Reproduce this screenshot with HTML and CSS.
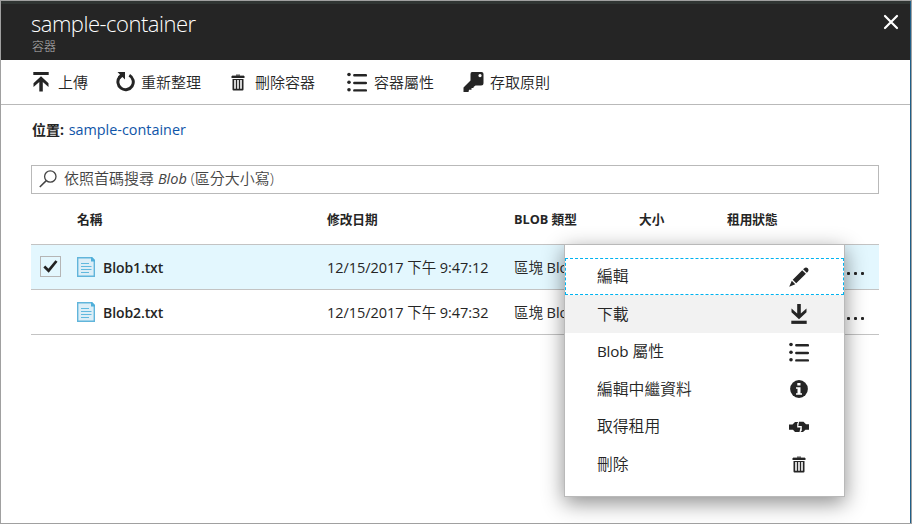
FILE: index.html
```html
<!DOCTYPE html>
<html lang="zh-Hant">
<head>
<meta charset="utf-8">
<title>sample-container</title>
<link rel="stylesheet" href="styles.css">
</head>
<body>
<svg class="defs" width="0" height="0">
  <symbol id="trash" viewBox="0 0 14 17"><path d="M5 .5h4v1h4v2H1v-2h4z" fill="#555"/><path d="M.5 2h13v2H.5z"/><path fill-rule="evenodd" d="M1.500 5h11v10.500q0 1-1 1h-9q-1 0-1-1zM3.200 6v8.700h1.600V6zm3 0v8.700h1.600V6zm3 0v8.700h1.600V6z"/></symbol>
  <symbol id="list" viewBox="0 0 20 20"><circle cx="2" cy="2.500" r="1.800"/><circle cx="2" cy="10.200" r="1.800"/><circle cx="2" cy="17.800" r="1.800"/><path d="M7.300 3.300h11.600M7.300 11h11.600M7.300 18.400h11.600" stroke="#252525" stroke-width="2.400" stroke-linecap="round"/></symbol>
  <symbol id="file" viewBox="0 0 18 20"><path d="M.7.7h14L17.300 3.500V19.300H.7z" fill="#dceef7" stroke="#61b5db" stroke-width="1.400"/><path d="M14 0h1l3 3v1.500h-4z" fill="#4fafda"/><path d="M4 6.500h8M4 9.500h10.500M4 12.500h10.500M4 15.500h8" stroke="#61b9de" stroke-width="1"/></symbol>
</svg>
<main class="blade">
  <header class="head">
    <div>
      <h1 class="title">sample-container</h1>
      <p class="subtitle">容器</p>
    </div>
    <svg class="close" viewBox="0 0 16 16"><path d="M2 2l12 12M14 2L2 14" stroke="#fff" stroke-width="2.200" stroke-linecap="round"/></svg>
  </header>
  <nav class="toolbar">
    <a class="tool upload"><svg width="16" height="20" viewBox="0 0 16 20"><path d="M.3 0h15.400v3H.3z"/><path d="M8 4.300l7.500 7v3.800l-5.700-5V19.500H6.300V10.100L.5 15.100v-3.800z"/></svg><span>上傳</span></a>
    <a class="tool refresh"><svg width="20" height="20" viewBox="0 0 20 20"><path d="M13.300 3.200A7.700 7.700 0 1 1 3.700 5" fill="none" stroke="#252525" stroke-width="3"/><path d="M1.500 0H9v7.500L6.500 5 4 7 2 4.500 4 2.500z"/></svg><span>重新整理</span></a>
    <a class="tool delete"><svg width="14" height="17"><use href="#trash"/></svg><span>刪除容器</span></a>
    <a class="tool props"><svg width="20" height="20"><use href="#list"/></svg><span>容器屬性</span></a>
    <a class="tool policy"><svg width="21" height="20" viewBox="0 0 21 20"><path fill-rule="evenodd" d="M9 0h9.500q2 0 2 2v9q0 2.500-2.500 2.500h-5.500L10.500 15v1H8.500v1.800H6L5.500 20H.5v-4.500L7.500 8.500V2Q7.500 0 9 0zm8 2a1.600 1.600 0 1 0 .01 0z"/></svg><span>存取原則</span></a>
  </nav>
  <section class="content">
    <p class="location"><b>位置:</b> <a>sample-container</a></p>
    <div class="search">
      <svg width="18" height="18" viewBox="0 0 18 18"><circle cx="11.300" cy="6.500" r="5.700" fill="none" stroke="#444" stroke-width="1.300"/><path d="M7.300 10.600L.8 17" stroke="#444" stroke-width="1.500"/></svg>
      <span>依照首碼搜尋 <i>Blob</i> (區分大小寫)</span>
    </div>
    <div class="table">
      <div class="row labels"><span></span><span>名稱</span><span>修改日期</span><span>BLOB 類型</span><span>大小</span><span>租用狀態</span><span></span></div>
      <div class="row selected">
        <span class="check"><svg width="15" height="13" viewBox="0 0 15 13"><path d="M1.300 6.500l4.300 4.200L13.500 1" fill="none" stroke="#222" stroke-width="2.700"/></svg></span>
        <span class="name"><svg width="18" height="20"><use href="#file"/></svg>Blob1.txt</span>
        <span class="date">12/15/2017 <em>下午</em> 9:47:12</span>
        <span class="type"><em>區塊</em> Blob</span><span></span><span></span>
        <span class="more"><i></i><i></i><i></i></span>
      </div>
      <div class="row">
        <span></span>
        <span class="name"><svg width="18" height="20"><use href="#file"/></svg>Blob2.txt</span>
        <span class="date">12/15/2017 <em>下午</em> 9:47:32</span>
        <span class="type"><em>區塊</em> Blob</span><span></span><span></span>
        <span class="more"><i></i><i></i><i></i></span>
      </div>
    </div>
  </section>
  <div class="menu">
    <a class="item focused"><span>編輯</span><svg width="20" height="20" viewBox="0 0 20 20"><path d="M15 1.500Q16.800-.3 18.800 1.200 20.300 3 18.700 5L17.800 5.800 14.100 2.300zM13.200 3.200l3.700 3.600L7.200 16.200 3.700 12.700zM2.800 13.700l3.500 3.500L.2 19.800z"/></svg></a>
    <a class="item hover"><span>下載</span><svg width="16" height="20" viewBox="0 0 16 20"><path d="M.3 16.700h15.400v3.200H.3z"/><path d="M8 15.300L.5 8.200V4.500l5.700 5V0h3.600v9.500l5.700-5v3.700z"/></svg></a>
    <a class="item"><span><span class="latin">Blob</span> 屬性</span><svg width="20" height="20"><use href="#list"/></svg></a>
    <a class="item"><span>編輯中繼資料</span><svg width="18" height="18" viewBox="0 0 18 18"><circle cx="9" cy="9" r="8.900"/><path d="M7.300 3h3.200v2.500H7.300zM6 7.300h4.500v6H12v1.500H6v-1.500h1.500V8.700H6z" fill="#fff"/></svg></a>
    <a class="item"><span>取得租用</span><svg width="20" height="12" viewBox="0 0 20 12"><path d="M0 3.500h3.500L6 1h3.200l-1 1.500V6.500h3.300l-1 4.500H6L4 8.700H0zM10 .8h4.500L17 3.300h3v5.400h-3.500L14 11h-2.500l1.300-1.500V5H9.300z"/></svg></a>
    <a class="item"><span>刪除</span><svg width="14" height="17"><use href="#trash"/></svg></a>
  </div>
</main>
</body>
</html>
```
FILE: styles.css
```css
* { box-sizing: border-box; }

body {
  margin: 0;
  font-family: "Open Sans", "Noto Sans CJK TC", sans-serif;
  color: #252525;
}

svg { fill: #252525; flex: none; }
.defs { position: absolute; }
h1, p { margin: 0; font-weight: 400; }
em { font-style: normal; font-weight: 350; }

.blade {
  position: relative;
  width: 912px;
  height: 524px;
  overflow: hidden;
  border: 1px solid #a0a0a0;
  background: #fff;
  box-shadow: inset -1px 0 #205f88;
}

.head {
  display: flex;
  justify-content: space-between;
  height: 59px;
  margin-right: 1px;
  padding: 4px 11px 0 30px;
  background: #252525;
  border-top: 3px solid #303533;
  color: #fff;
}

.title {
  font-size: 22px;
  line-height: 30px;
  font-weight: 300;
  letter-spacing: -0.5px;
}

.subtitle {
  padding-left: 1px;
  font-size: 12px;
  line-height: 17px;
  font-weight: 300;
  color: #b4b4b4;
}

.close { width: 16px; height: 16px; margin-top: 6px; }

.toolbar {
  display: flex;
  height: 45px;
  margin-right: 1px;
  padding-left: 32px;
  border-bottom: 1px solid #b9b9b9;
}

.tool {
  display: flex;
  align-items: center;
  font-size: 15px;
  font-weight: 350;
}
.tool span { padding-bottom: 2px; }

.upload { width: 83px; gap: 9px; }
.refresh { width: 115px; gap: 5px; }
.delete { width: 116px; gap: 10px; }
.props { width: 116px; gap: 7px; }
.policy { gap: 6px; }

.content { padding: 0 32px 0 30px; }

.location {
  height: 60px;
  padding: 15px 0 0 1px;
  font-size: 14px;
  line-height: 20px;
}
.location b { margin-right: 1px; }
.location a { color: #0f55a8; font-size: 14.4px; }

.search {
  display: flex;
  align-items: center;
  gap: 7px;
  height: 29px;
  padding: 0 7px 2px;
  border: 1px solid #b9b9b9;
  color: #444;
  font-size: 15px;
  font-weight: 350;
}
.search span { padding-bottom: 2px; }
.search i { font-size: 14.5px; font-weight: 400; }

.row {
  display: grid;
  grid-template-columns: 46px 250px 187px 125px 88px 119px 33px;
  align-items: center;
  height: 45px;
  border-bottom: 1px solid #c3c3c3;
  font-size: 14.5px;
  white-space: nowrap;
}
.labels { height: 51px; padding-bottom: 2px; font-size: 12.7px; font-weight: 700; }
.selected { background: #e3f7fe; }
.date, .type { padding-bottom: 2px; letter-spacing: -0.05px; }

.check {
  display: flex;
  align-items: center;
  justify-content: center;
  width: 21px;
  height: 21px;
  margin: 0 0 1px 9px;
  border: 1px solid #b5b5b5;
}

.name {
  display: flex;
  align-items: center;
  gap: 8px;
  font-weight: 600;
  font-size: 14px;
  letter-spacing: -0.1px;
}
.more { display: flex; gap: 4px; padding: 12px 0 0 1px; }
.more i { width: 3px; height: 3px; border-radius: 1px; background: #252525; }

.menu {
  position: absolute;
  left: 563px;
  top: 243px;
  width: 281px;
  height: 253px;
  padding-top: 13px;
  border: 1px solid #b9b9b9;
  background: #fff;
  box-shadow: 0 6px 20px rgba(0, 0, 0, .45);
}

.item {
  display: grid;
  grid-template-columns: 1fr 24px;
  align-items: center;
  height: 37.5px;
  padding: 0 33px 0 32px;
  font-size: 15.8px;
  font-weight: 350;
}
.item > span { padding-bottom: 2px; }
.latin { font-size: 15.2px; font-weight: 400; letter-spacing: -0.2px; }
.item svg { justify-self: center; }
.focused { height: 37px; border: 1px dashed #00b3f0; padding: 0 32px 0 31px; }
.hover { height: 38px; background: #f2f2f2; }
```
